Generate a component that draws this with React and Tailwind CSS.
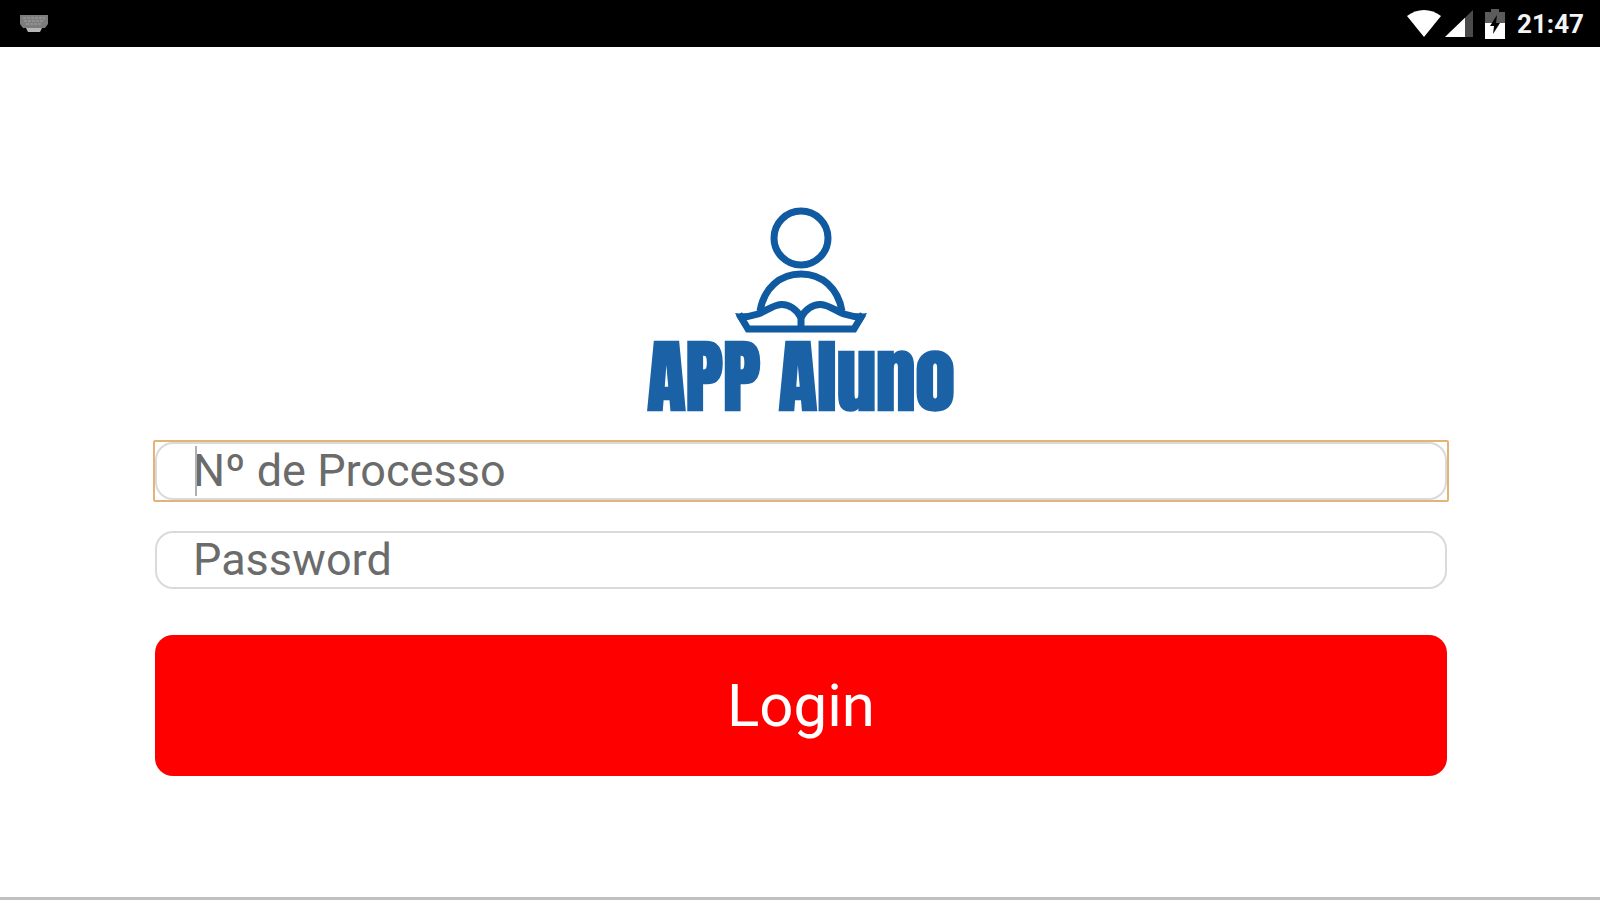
import React from 'react';

const KeyboardIcon = () => (
  <svg width="28" height="18" viewBox="0 0 28 18" aria-hidden="true">
    <path d="M0 0h28v9l-3 4H3L0 9z" fill="#7d7d7d" />
    <path d="M3 3h22M4 6h20M6 9h16" stroke="#a3a3a3" strokeWidth="1" strokeDasharray="3 1" />
    <path d="M6 13h16l-2 4H8z" fill="#b5b5b5" />
  </svg>
);

const WifiIcon = () => (
  <svg width="34" height="28" viewBox="0 0 34 28" aria-hidden="true">
    <path d="M17 27 0 6C5 2 11 0 17 0s12 2 17 6z" fill="#fff" />
  </svg>
);

const SignalIcon = () => (
  <svg width="28" height="27" viewBox="0 0 28 27" aria-hidden="true">
    <path d="M28 0v27H0z" fill="#4a4a4a" />
    <path d="M20 7.7V27H0z" fill="#fff" />
  </svg>
);

const BatteryIcon = () => (
  <svg width="20" height="30" viewBox="0 0 20 30" aria-hidden="true">
    <path d="M6 0h8v3h6v12H0V3h6z" fill="#5c5c5c" />
    <path d="M0 14h20v16H0z" fill="#fff" />
    <path d="M12 6 5 17h4l-1 8 7-11h-4z" fill="#000" />
  </svg>
);

const StudentLogo = () => (
  <svg width="134" height="126" viewBox="0 0 134 126" fill="none" stroke="#0f5aa0" strokeWidth="7" aria-hidden="true">
    <circle cx="67" cy="31" r="27" />
    <path d="M26 104C30 81 46 67 67 67s37 14 41 37" />
    <path d="M5 107l9 15h106l9-15" />
    <path d="M6 110c6 0 12-1 18-3 8-3 15-9 23-9.500 8-.5 16 5 20 13 4-8 12-13.500 20-13 8 .5 15 6.500 23 9.500 6 2 12 3 18 3" />
    <path d="M67 122v-14" />
    <path d="M1 106l8 1v8H6zM133 106l-8 1v8h3z" fill="#0f5aa0" stroke="none" />
  </svg>
);

const StatusBar = () => (
  <header className="flex h-[47px] items-center justify-between bg-black pl-5 pr-4">
    <KeyboardIcon />
    <div className="flex items-center">
      <WifiIcon />
      <div className="ml-1">
        <SignalIcon />
      </div>
      <div className="ml-3">
        <BatteryIcon />
      </div>
      <span className="ml-3 text-[26px] font-bold leading-8 text-gray-100">21:47</span>
    </div>
  </header>
);

const Field = ({ id, label, type, focused }) => (
  <div className={focused ? 'relative rounded-xs border-2 border-[#e5b377]' : 'relative border-2 border-transparent'}>
    <input
      id={id}
      type={type}
      placeholder={label}
      aria-label={label}
      className="block h-[58px] w-full rounded-[18px] border-2 border-[#dadada] bg-white px-9 text-[45px] text-[#6b6b6b] outline-none placeholder:text-[#6b6b6b]"
    />
    {focused && <span className="absolute inset-y-1 left-10 w-0.5 bg-[#b0b0b0]" />}
  </div>
);

export default function App() {
  return (
    <div className="flex min-h-screen flex-col border-b-3 border-[#c0c0c0] bg-white font-['Roboto',sans-serif]">
      <StatusBar />
      <main className="flex flex-col pl-[153px] pr-[151px] pt-40">
        <div className="flex flex-col items-center pb-5">
          <StudentLogo />
          <h1 className="whitespace-nowrap font-['Impact','Anton','Noto_Sans_ExtraCondensed','Liberation_Sans_Narrow',sans-serif] text-[79px] font-black leading-[87px] text-[#1a62a5]">
            APP Aluno
          </h1>
        </div>
        <form className="flex flex-col" onSubmit={(e) => e.preventDefault()}>
          <div className="flex flex-col gap-[27px]">
            <Field id="processo" label="Nº de Processo" type="text" focused />
            <Field id="password" label="Password" type="password" />
          </div>
          <button type="submit" className="mx-0.5 mt-11 h-[141px] rounded-[18px] bg-[#ff0000] text-[60px] text-white">
            Login
          </button>
        </form>
      </main>
    </div>
  );
}
